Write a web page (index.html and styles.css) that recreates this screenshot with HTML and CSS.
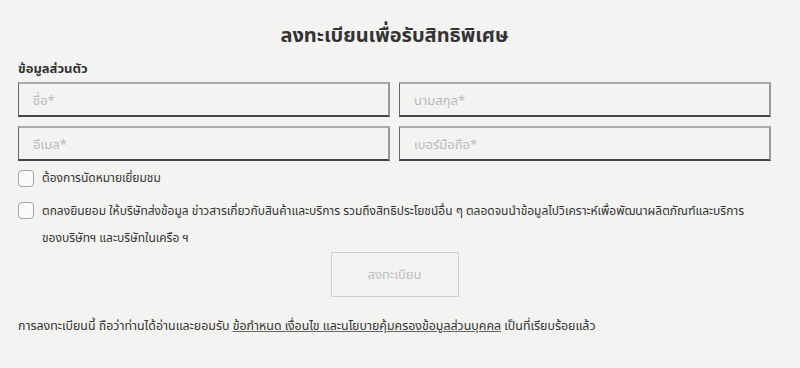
FILE: index.html
```html
<!DOCTYPE html>
<html lang="th">
<head>
  <meta charset="UTF-8" />
  <meta name="viewport" content="width=device-width, initial-scale=1.0" />
  <title>ลงทะเบียน</title>
  <link rel="stylesheet" href="styles.css">
</head>
<body>
  <div class="register">
    <h2 class="register-title">ลงทะเบียนเพื่อรับสิทธิพิเศษ</h2>

    <div class="section-label">ข้อมูลส่วนตัว</div>

    <div class="field-grid">
      <input type="text" class="field" placeholder="ชื่อ*">
      <input type="text" class="field" placeholder="นามสกุล*">
      <input type="text" class="field" placeholder="อีเมล*">
      <input type="text" class="field" placeholder="เบอร์มือถือ*">
    </div>

    <label class="check-row">
      <input type="checkbox" class="check">
      <span>ต้องการนัดหมายเยี่ยมชม</span>
    </label>

    <label class="check-row consent">
      <input type="checkbox" class="check">
      <span>ตกลงยินยอม ให้บริษัทส่งข้อมูล ข่าวสารเกี่ยวกับสินค้าและบริการ รวมถึงสิทธิประโยชน์อื่น ๆ ตลอดจนนำข้อมูลไปวิเคราะห์เพื่อพัฒนาผลิตภัณฑ์และบริการ<br>ของบริษัทฯ และบริษัทในเครือ ฯ</span>
    </label>

    <div class="submit-row">
      <button class="submit-button" disabled>ลงทะเบียน</button>
    </div>

    <p class="terms">
      การลงทะเบียนนี้ ถือว่าท่านได้อ่านและยอมรับ <a href="#">ข้อกำหนด เงื่อนไข และนโยบายคุ้มครองข้อมูลส่วนบุคคล</a> เป็นที่เรียบร้อยแล้ว
    </p>
  </div>
</body>
</html>
```

FILE: styles.css
```css
* {
  box-sizing: border-box;
  margin: 0;
  padding: 0;
}

body {
  background: #f3f3f2;
  color: #333;
  font-family: "Noto Sans", "Noto Sans Thai", sans-serif;
  font-size: 12px;
}

.register {
  width: 753px;
  margin-left: 18px;
  padding-top: 20px;
}

.register-title {
  text-align: center;
  font-size: 20px;
  font-weight: 700;
  line-height: 30px;
  color: #333;
}

.section-label {
  margin-top: 8px;
  font-size: 13px;
  font-weight: 700;
  line-height: 20px;
}

.field-grid {
  display: grid;
  grid-template-columns: 1fr 1fr;
  column-gap: 9px;
  row-gap: 9px;
  margin-top: 4px;
}

.field {
  height: 35px;
  padding: 0 14px;
  background: transparent;
  border-style: solid;
  border-width: 2px 2px 2px 1px;
  border-color: #aaa #999 #444 #666;
  font-family: inherit;
  font-size: 13px;
  color: #333;
  outline: none;
}

.field::placeholder {
  color: #b9b9b9;
}

.check-row {
  display: flex;
  align-items: flex-start;
  gap: 8px;
  margin-top: 8px;
  font-size: 12px;
  line-height: 18px;
}

.consent {
  margin-top: 10px;
  line-height: 27px;
}

.consent .check {
  margin-top: 5px;
}

.check {
  appearance: none;
  flex: none;
  width: 16px;
  height: 17px;
  margin-top: 1px;
  background: #fafafa;
  border: 1px solid #a5a5a5;
  border-radius: 4px;
}

.submit-row {
  display: flex;
  justify-content: center;
  margin-top: 1px;
}

.submit-button {
  width: 128px;
  height: 45px;
  background: transparent;
  border: 1px solid #cfcfcf;
  font-family: inherit;
  font-size: 13px;
  color: #bdbdbd;
}

.terms {
  margin-top: 19px;
  line-height: 20px;
  font-size: 12.4px;
}

.terms a {
  color: #333;
  text-decoration: underline;
  text-decoration-color: #666;
}
```
